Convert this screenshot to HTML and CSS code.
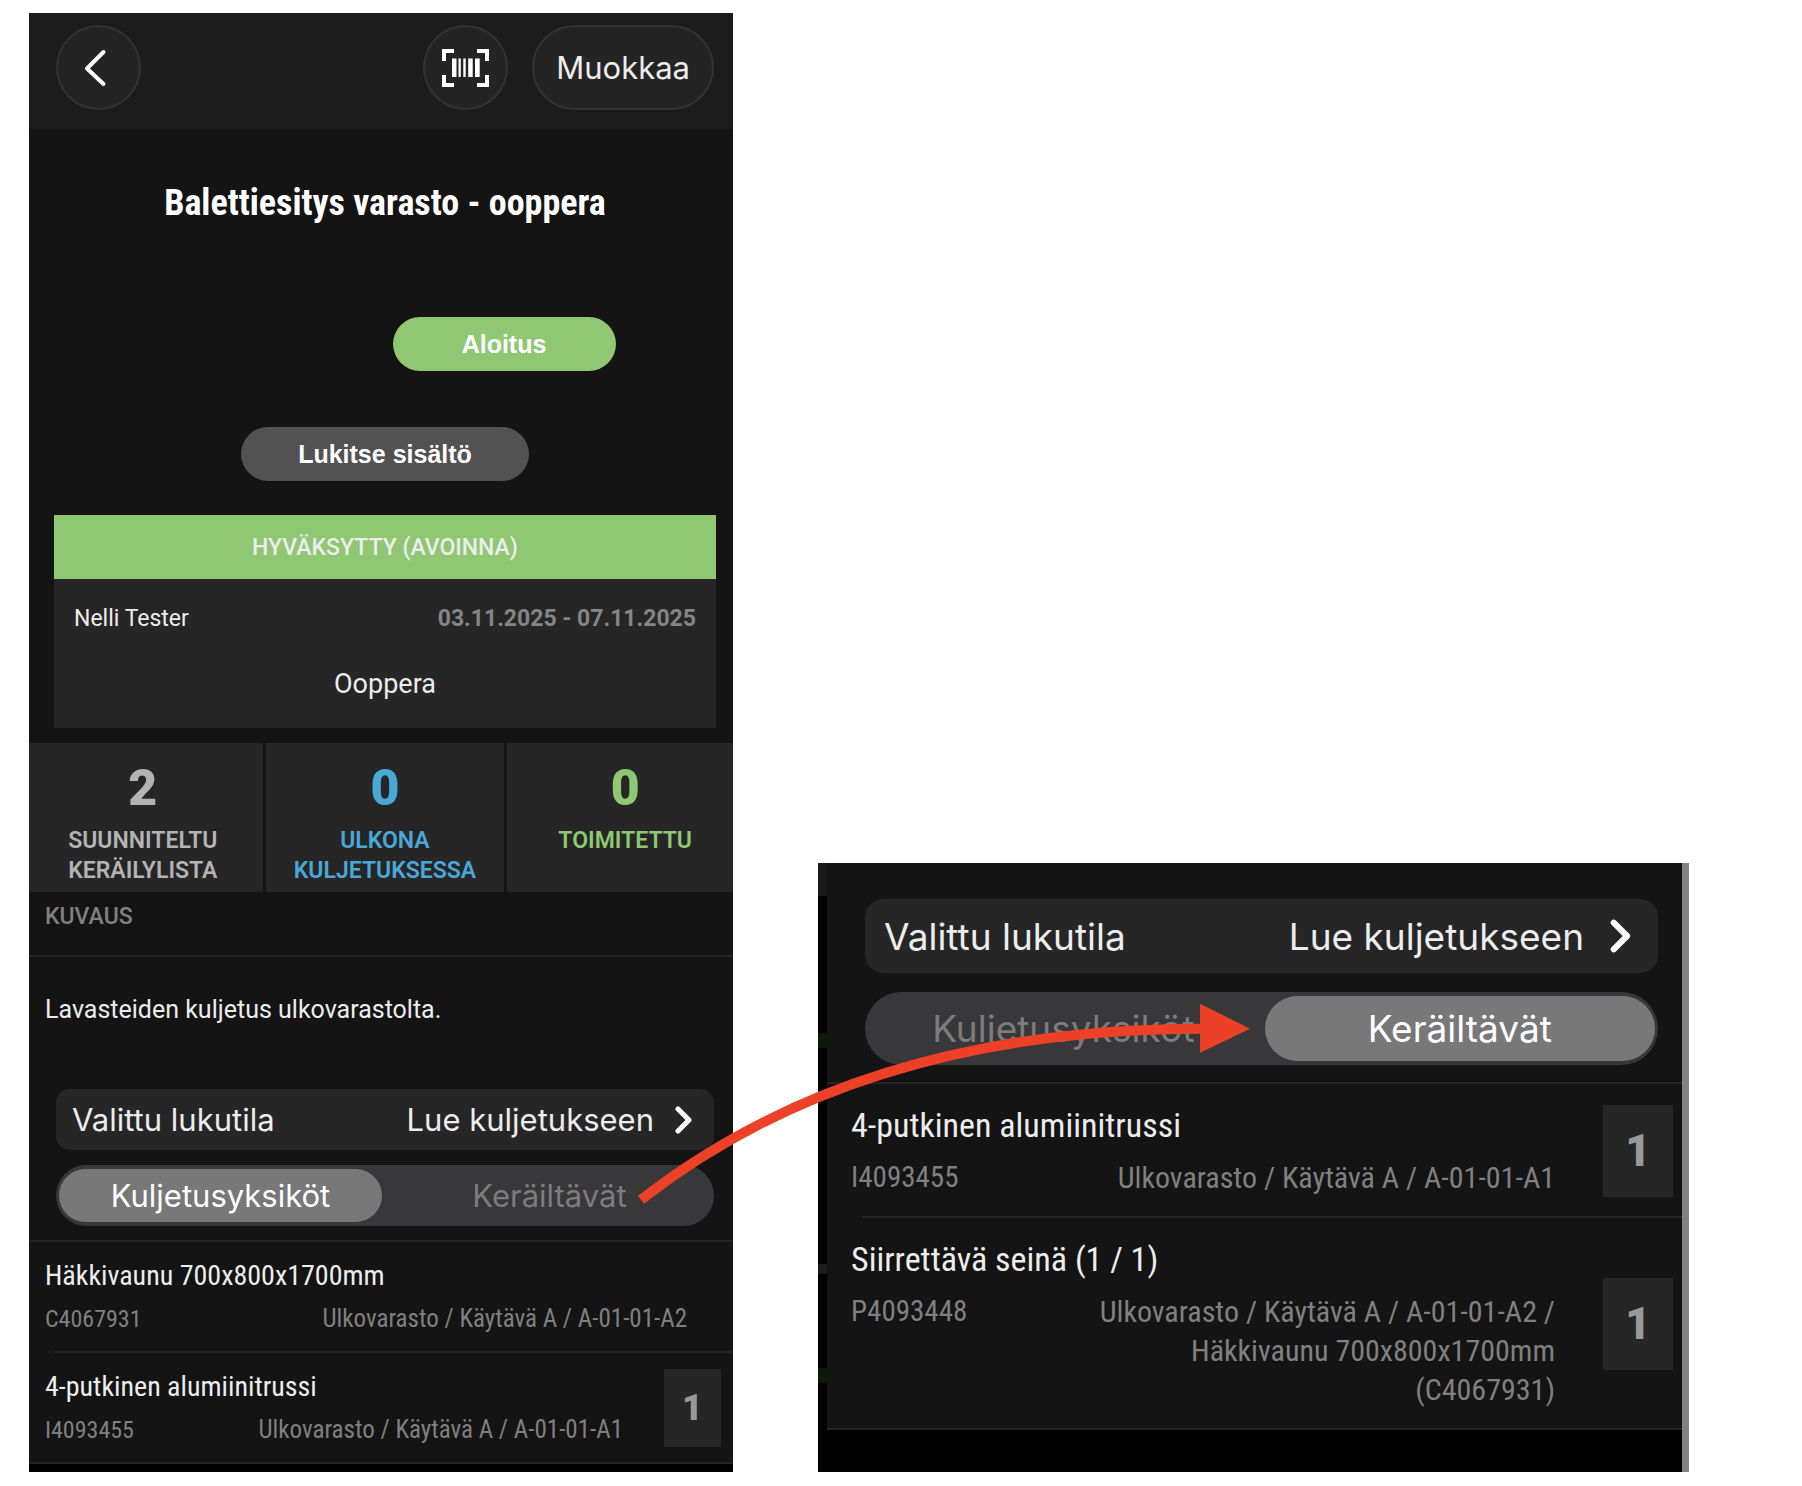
FILE: index.html
```html
<!DOCTYPE html>
<html lang="fi">
<head>
<meta charset="utf-8">
<meta name="viewport" content="width=device-width, initial-scale=1">
<title>Balettiesitys varasto - ooppera</title>
<link rel="stylesheet" href="styles.css">
</head>
<body>
<main class="board">
  <section class="screen" aria-label="Kuljetusyksiköt">
    <header class="topbar">
      <button class="round-btn" type="button" aria-label="Takaisin">
        <svg class="icon-back" width="30" height="38" viewBox="0 0 30 38" aria-hidden="true"><path d="M19.500 3 3 19.500 19.500 35"/></svg>
      </button>
      <div class="topbar-actions">
        <button class="round-btn" type="button" aria-label="Skannaa viivakoodi">
          <svg class="icon-scan" width="47" height="38" viewBox="0 0 47 38" aria-hidden="true">
            <path class="frame" d="M2 12V2h10M35 2h10v10M45 26v10H35M12 36H2V26"/>
            <path class="bars" d="M10 9.500h4.500v18.500h-4.500zM16.500 9.500h2.300v18.500h-2.300zM21.300 9.500h2.400v18.500h-2.400zM26.200 9.500h4.500v18.500h-4.500zM33 9.500h4.700v18.500h-4.700z"/>
          </svg>
        </button>
        <button class="pill-btn" type="button">Muokkaa</button>
      </div>
    </header>
    <div class="intro">
      <h1 class="title">Balettiesitys varasto - ooppera</h1>
      <button class="action action-start" type="button">Aloitus</button>
      <button class="action action-lock" type="button">Lukitse sisältö</button>
      <div class="card">
        <p class="card-status">HYVÄKSYTTY (AVOINNA)</p>
        <div class="card-body">
          <div class="card-row">
            <span class="person">Nelli Tester</span>
            <span class="dates">03.11.2025 - 07.11.2025</span>
          </div>
          <p class="place">Ooppera</p>
        </div>
      </div>
    </div>
    <div class="stats">
      <div class="stat stat-planned"><strong>2</strong><span>SUUNNITELTU KERÄILYLISTA</span></div>
      <div class="stat stat-out"><strong>0</strong><span>ULKONA KULJETUKSESSA</span></div>
      <div class="stat stat-done"><strong>0</strong><span>TOIMITETTU</span></div>
    </div>
    <h2 class="section-head">KUVAUS</h2>
    <p class="description">Lavasteiden kuljetus ulkovarastolta.</p>
    <div class="controls">
      <button class="mode" type="button">
        <span>Valittu lukutila</span>
        <span class="mode-value">Lue kuljetukseen
          <svg class="icon-next" viewBox="0 0 18 28" aria-hidden="true"><path d="M3 3l11 11L3 25"/></svg>
        </span>
      </button>
      <div class="segments" role="radiogroup" aria-label="Näkymä">
        <input type="radio" name="view-a" id="a-units" checked><label for="a-units">Kuljetusyksiköt</label>
        <input type="radio" name="view-a" id="a-items"><label for="a-items">Keräiltävät</label>
      </div>
    </div>
    <ul class="items">
      <li>
        <div class="item item-plain">
          <div class="item-text">
            <h3>Häkkivaunu 700x800x1700mm</h3>
            <div class="item-meta"><span class="code">C4067931</span><span class="location">Ulkovarasto / Käytävä A / A-01-01-A2</span></div>
          </div>
        </div>
      </li>
      <li>
        <div class="item">
          <div class="item-text">
            <h3>4-putkinen alumiinitrussi</h3>
            <div class="item-meta"><span class="code">I4093455</span><span class="location">Ulkovarasto / Käytävä A / A-01-01-A1</span></div>
          </div>
          <span class="count">1</span>
        </div>
      </li>
    </ul>
  </section>

  <section class="screen screen-large" aria-label="Keräiltävät">
    <div class="controls">
      <button class="mode" type="button">
        <span>Valittu lukutila</span>
        <span class="mode-value">Lue kuljetukseen
          <svg class="icon-next" viewBox="0 0 18 28" aria-hidden="true"><path d="M3 3l11 11L3 25"/></svg>
        </span>
      </button>
      <div class="segments" role="radiogroup" aria-label="Näkymä">
        <input type="radio" name="view-b" id="b-units"><label for="b-units">Kuljetusyksiköt</label>
        <input type="radio" name="view-b" id="b-items" checked><label for="b-items">Keräiltävät</label>
      </div>
    </div>
    <ul class="items">
      <li>
        <div class="item">
          <div class="item-text">
            <h3>4-putkinen alumiinitrussi</h3>
            <div class="item-meta"><span class="code">I4093455</span><span class="location">Ulkovarasto / Käytävä A / A-01-01-A1</span></div>
          </div>
          <span class="count">1</span>
        </div>
      </li>
      <li>
        <div class="item">
          <div class="item-text">
            <h3>Siirrettävä seinä (1 / 1)</h3>
            <div class="item-meta"><span class="code">P4093448</span><span class="location">Ulkovarasto / Käytävä A / A-01-01-A2 /<br>Häkkivaunu 700x800x1700mm<br>(C4067931)</span></div>
          </div>
          <span class="count">1</span>
        </div>
      </li>
    </ul>
  </section>

  <svg class="arrow" viewBox="0 0 1802 1486" preserveAspectRatio="none" aria-hidden="true">
    <path class="arrow-line" d="M641 1199Q860 1028 1202 1028"/>
    <path class="arrow-head" d="M1200 1003l50 25-50 24z"/>
  </svg>
</main>
</body>
</html>
```
FILE: styles.css
```css
* { box-sizing: border-box; }

body {
  margin: 0;
  background: #fff;
  color: #ededed;
  font-family: Roboto, "Noto Sans", sans-serif;
}

h1, h2, h3, p, ul { margin: 0; padding: 0; font-weight: 400; }
ul { list-style: none; }
button { border: 0; padding: 0; color: inherit; font-family: inherit; cursor: pointer; }
svg { display: block; }

.board {
  position: relative;
  display: grid;
  grid-template-columns: minmax(0, 704fr) minmax(0, 871fr);
  gap: 85px;
  align-items: end;
  padding: 13px 113px 15px 29px;
}

.screen {
  --ui-size: 31px;
  --name-size: 28px;
  --code-size: 24px;
  --meta-size: 25px;
  background: #141414;
  border-bottom: 8px solid #000;
}

/* Top bar */
.topbar {
  display: flex;
  justify-content: space-between;
  padding: 12px 19px 19px 27px;
  background: #1c1c1c;
}
.topbar-actions { display: flex; gap: 24px; }
.round-btn, .pill-btn {
  display: flex;
  align-items: center;
  justify-content: center;
  height: 85px;
  background: #242424;
  border: 2px solid #333;
  border-radius: 43px;
}
.round-btn { width: 85px; }
.pill-btn {
  padding: 0 22px;
  font-family: Inter, sans-serif;
  font-size: 31px;
}
.icon-back path { fill: none; stroke: #fff; stroke-width: 4; stroke-linecap: round; stroke-linejoin: round; }
.icon-scan .frame { fill: none; stroke: #fff; stroke-width: 4; }
.icon-scan .bars { fill: #fff; }

/* Title, actions and status card */
.intro {
  display: flex;
  flex-direction: column;
  align-items: center;
  padding: 52px 17px 15px 25px;
}
.title {
  font-family: "Roboto Condensed", "Liberation Sans Narrow", Roboto, sans-serif;
  font-size: 36px;
  line-height: 44px;
  font-weight: 700;
  color: #fff;
}
.action {
  height: 54px;
  border-radius: 27px;
  font-family: "Liberation Sans", Arial, sans-serif;
  font-size: 25px;
  font-weight: 700;
  color: #fff;
}
.action-start { width: 223px; margin: 92px 0 56px 238px; background: #8fc773; }
.action-lock { width: 288px; margin-bottom: 34px; background: #525252; }
.card { align-self: stretch; background: #262626; }
.card-status {
  padding-top: 2px;
  background: #8fc773;
  text-align: center;
  font-size: 23px;
  line-height: 62px;
  font-weight: 500;
}
.card-body { padding: 25px 20px 28px; }
.card-row { display: flex; justify-content: space-between; font-size: 23px; line-height: 30px; }
.dates { color: #858585; font-weight: 700; }
.place { margin-top: 34px; text-align: center; font-size: 27px; line-height: 32px; }

/* Counters */
.stats { display: grid; grid-template-columns: 234fr 239fr 226fr; gap: 3px; }
.stat {
  display: flex;
  flex-direction: column;
  align-items: center;
  padding: 15px 30px 6px;
  background: #262626;
  text-align: center;
  font-size: 23px;
  line-height: 30px;
  font-weight: 600;
}
.stat strong { font-size: 50px; line-height: 60px; font-weight: 900; }
.stat span { margin-top: 8px; }
.stat-planned { color: #b3b3b3; padding-left: 24px; }
.stat-out { padding-left: 20px; padding-right: 20px; color: #4aa8d8; }
.stat-done { padding-left: 40px; color: #8fc773; }

.section-head {
  padding: 10px 16px 23px;
  border-bottom: 2px solid #242424;
  font-size: 23px;
  line-height: 30px;
  font-weight: 500;
  color: #808080;
}
.description { padding: 37px 16px 63px; font-size: 25px; line-height: 32px; }

/* Reading mode and view switch */
.controls {
  display: flex;
  flex-direction: column;
  gap: 15px;
  padding: 0 19px 14px 27px;
  font-family: Inter, sans-serif;
  font-size: var(--ui-size);
}
.mode {
  display: flex;
  align-items: center;
  justify-content: space-between;
  height: 61px;
  padding: 0 21px 0 16px;
  border-radius: 14px;
  background: #262626;
  font-size: inherit;
}
.mode-value { display: flex; align-items: center; gap: 21px; }
.icon-next { width: 18px; height: 28px; }
.icon-next path { fill: none; stroke: #fff; stroke-width: 5; stroke-linecap: round; stroke-linejoin: round; }
.segments {
  display: flex;
  gap: 6px;
  height: 61px;
  padding: 4px 3px;
  border-radius: 31px;
  background: #38383a;
}
.segments input { position: absolute; opacity: 0; pointer-events: none; }
.segments label {
  flex: 1;
  display: flex;
  align-items: center;
  justify-content: center;
  border-radius: 33px;
  color: #7c7c7e;
}
.segments input:checked + label { background: #787878; color: #fff; }

/* Item lists */
.items { border-top: 2px solid #242424; border-bottom: 2px solid #242424; }
.items li + li::before {
  content: "";
  display: block;
  height: 2px;
  margin-left: 25px;
  background: #242424;
}
.item { display: flex; align-items: center; padding: 17px 12px 17px 16px; }
.item-plain { padding-right: 46px; }
.item-text {
  flex: 1;
  font-family: "Roboto Condensed", "Liberation Sans Narrow", Roboto, sans-serif;
}
.item h3 { font-size: var(--name-size); line-height: 34px; font-weight: 450; }
.item-meta {
  display: flex;
  justify-content: space-between;
  margin-top: 11px;
  font-size: var(--meta-size);
  line-height: 30px;
  color: #808080;
}
.code { font-size: var(--code-size); }
.location { text-align: right; }
.count {
  display: flex;
  align-items: center;
  justify-content: center;
  width: 57px;
  height: 78px;
  margin: -8px 0 -8px 41px;
  background: #262626;
  color: #999;
  font-size: 36px;
  font-weight: 900;
}

/* Enlarged screen: a sliver of the neighbouring view shows on its left, a scroll track on its right */
.screen-large {
  --ui-size: 37px;
  --name-size: 34px;
  --code-size: 29px;
  --meta-size: 30px;
  padding: 36px 7px 42px 9px;
  border-bottom: 0;
  background:
    linear-gradient(#828282, #828282) right / 7px 100% no-repeat,
    linear-gradient(
      #1a1a1a 33px, #000 33px, #000 170px, #0c1a08 170px, #0c1a08 185px, #000 185px,
      #000 401px, #1c1c1c 401px, #1c1c1c 411px, #000 411px,
      #000 505px, #0c1a08 505px, #0c1a08 520px, #000 520px
    ) left / 9px 100% no-repeat,
    linear-gradient(to top, #000 42px, #141414 42px);
}
.screen-large .controls { gap: 19px; padding: 0 24px 17px 38px; }
.screen-large .mode { height: 74px; padding: 0 26px 0 19px; border-radius: 18px; }
.screen-large .mode-value { gap: 26px; }
.screen-large .icon-next { width: 22px; height: 34px; }
.screen-large .segments { height: 73px; border-radius: 37px; }
.screen-large .items li + li::before { margin-left: 35px; }
.screen-large .item { padding: 20px 9px 19px 24px; }
.screen-large .item h3 { line-height: 42px; }
.screen-large .item-meta { margin-top: 12px; line-height: 39px; }
.screen-large .count { width: 70px; height: 92px; margin-left: 48px; font-size: 44px; }

.arrow { position: absolute; inset: 0; width: 100%; height: 100%; pointer-events: none; }
.arrow-line { fill: none; stroke: #ec4126; stroke-width: 10; }
.arrow-head { fill: #ec4126; }
```
